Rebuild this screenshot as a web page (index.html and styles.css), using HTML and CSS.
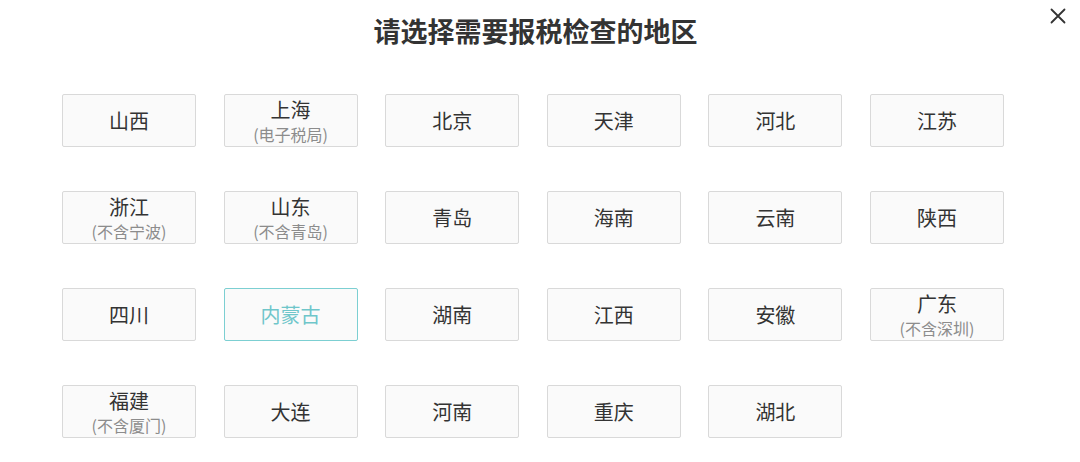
FILE: index.html
```html
<!DOCTYPE html>
<html lang="zh-CN">
<head>
  <meta charset="UTF-8">
  <title>选择地区</title>
  <link rel="stylesheet" href="styles.css">
</head>
<body>

  <!-- Title + close -->
  <header class="dialog-head">
    <h1 class="title">请选择需要报税检查的地区</h1>
    <button class="close" aria-label="关闭">
      <svg width="16" height="16" viewBox="0 0 16 16">
        <path d="M1.5 1.5L14.5 14.5M14.5 1.5L1.5 14.5" stroke="#333" stroke-width="1.8" stroke-linecap="round"/>
      </svg>
    </button>
  </header>

  <!-- Region grid -->
  <div class="regions">
    <div class="region">山西</div>
    <div class="region"><span class="name">上海</span><span class="sub">(电子税局)</span></div>
    <div class="region">北京</div>
    <div class="region">天津</div>
    <div class="region">河北</div>
    <div class="region">江苏</div>

    <div class="region"><span class="name">浙江</span><span class="sub">(不含宁波)</span></div>
    <div class="region"><span class="name">山东</span><span class="sub">(不含青岛)</span></div>
    <div class="region">青岛</div>
    <div class="region">海南</div>
    <div class="region">云南</div>
    <div class="region">陕西</div>

    <div class="region">四川</div>
    <div class="region active">内蒙古</div>
    <div class="region">湖南</div>
    <div class="region">江西</div>
    <div class="region">安徽</div>
    <div class="region"><span class="name">广东</span><span class="sub">(不含深圳)</span></div>

    <div class="region"><span class="name">福建</span><span class="sub">(不含厦门)</span></div>
    <div class="region">大连</div>
    <div class="region">河南</div>
    <div class="region">重庆</div>
    <div class="region">湖北</div>
  </div>

</body>
</html>
```

FILE: styles.css
```css
* {
  margin: 0;
  padding: 0;
  box-sizing: border-box;
}

body {
  font-family: "Noto Sans CJK SC", "Noto Sans", sans-serif;
  background: #fff;
  color: #333;
  width: 1080px;
  height: 462px;
  overflow: hidden;
}

/* Header */
.dialog-head {
  position: relative;
  padding-top: 12px;
  text-align: center;
}

.title {
  font-size: 27px;
  line-height: 37px;
  font-weight: bold;
  color: #333;
  padding-right: 9px;
}

.close {
  position: absolute;
  top: 7px;
  right: 13px;
  width: 18px;
  height: 18px;
  border: none;
  background: none;
  cursor: pointer;
  display: flex;
  align-items: center;
  justify-content: center;
}

/* Grid of regions */
.regions {
  display: grid;
  grid-template-columns: repeat(6, 134px);
  column-gap: 27.6px;
  row-gap: 44px;
  margin-top: 45px;
  padding-left: 62px;
}

.region {
  height: 53px;
  border: 1px solid #d9d9d9;
  border-radius: 2px;
  background: #fafafa;
  display: flex;
  flex-direction: column;
  align-items: center;
  justify-content: center;
  font-size: 20px;
  line-height: 28px;
  color: #333;
  cursor: pointer;
}

.region .name {
  line-height: 27px;
}

.region .sub {
  font-size: 16px;
  line-height: 22px;
  color: #8c8c8c;
}

.region.active {
  border-color: #7ccfd2;
  color: #6fc6ca;
}
```
